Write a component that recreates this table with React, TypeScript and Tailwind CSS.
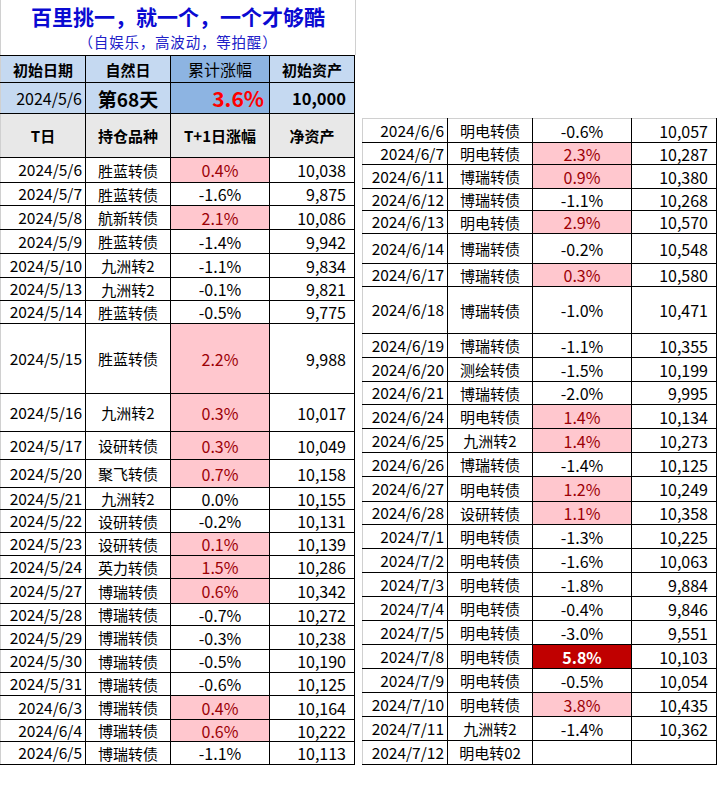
type Row = { d: string; n: string; p: string; v: string; h: string; up?: boolean; big?: boolean }

const left: Row[] = [
  { d: '2024/5/6', n: '胜蓝转债', p: '0.4%', v: '10,038', h: 'h-[25px]', up: true },
  { d: '2024/5/7', n: '胜蓝转债', p: '-1.6%', v: '9,875', h: 'h-[23px]' },
  { d: '2024/5/8', n: '航新转债', p: '2.1%', v: '10,086', h: 'h-[24px]', up: true },
  { d: '2024/5/9', n: '胜蓝转债', p: '-1.4%', v: '9,942', h: 'h-[24px]' },
  { d: '2024/5/10', n: '九洲转2', p: '-1.1%', v: '9,834', h: 'h-[24px]' },
  { d: '2024/5/13', n: '九洲转2', p: '-0.1%', v: '9,821', h: 'h-[23px]' },
  { d: '2024/5/14', n: '胜蓝转债', p: '-0.5%', v: '9,775', h: 'h-[23px]' },
  { d: '2024/5/15', n: '胜蓝转债', p: '2.2%', v: '9,988', h: 'h-[70px]', up: true },
  { d: '2024/5/16', n: '九洲转2', p: '0.3%', v: '10,017', h: 'h-[38px]', up: true },
  { d: '2024/5/17', n: '设研转债', p: '0.3%', v: '10,049', h: 'h-[28px]', up: true },
  { d: '2024/5/20', n: '聚飞转债', p: '0.7%', v: '10,158', h: 'h-[28px]', up: true },
  { d: '2024/5/21', n: '九洲转2', p: '0.0%', v: '10,155', h: 'h-[22px]' },
  { d: '2024/5/22', n: '设研转债', p: '-0.2%', v: '10,131', h: 'h-[23px]' },
  { d: '2024/5/23', n: '设研转债', p: '0.1%', v: '10,139', h: 'h-[23px]', up: true },
  { d: '2024/5/24', n: '英力转债', p: '1.5%', v: '10,286', h: 'h-[23px]', up: true },
  { d: '2024/5/27', n: '博瑞转债', p: '0.6%', v: '10,342', h: 'h-[25px]', up: true },
  { d: '2024/5/28', n: '博瑞转债', p: '-0.7%', v: '10,272', h: 'h-[22px]' },
  { d: '2024/5/29', n: '博瑞转债', p: '-0.3%', v: '10,238', h: 'h-[24px]' },
  { d: '2024/5/30', n: '博瑞转债', p: '-0.5%', v: '10,190', h: 'h-[23px]' },
  { d: '2024/5/31', n: '博瑞转债', p: '-0.6%', v: '10,125', h: 'h-[23px]' },
  { d: '2024/6/3', n: '博瑞转债', p: '0.4%', v: '10,164', h: 'h-[24px]', up: true },
  { d: '2024/6/4', n: '博瑞转债', p: '0.6%', v: '10,222', h: 'h-[22px]', up: true },
  { d: '2024/6/5', n: '博瑞转债', p: '-1.1%', v: '10,113', h: 'h-[23px]' },
]

const right: Row[] = [
  { d: '2024/6/6', n: '明电转债', p: '-0.6%', v: '10,057', h: 'h-[24px]' },
  { d: '2024/6/7', n: '明电转债', p: '2.3%', v: '10,287', h: 'h-[22px]', up: true },
  { d: '2024/6/11', n: '博瑞转债', p: '0.9%', v: '10,380', h: 'h-[24px]', up: true },
  { d: '2024/6/12', n: '博瑞转债', p: '-1.1%', v: '10,268', h: 'h-[22px]' },
  { d: '2024/6/13', n: '明电转债', p: '2.9%', v: '10,570', h: 'h-[23px]', up: true },
  { d: '2024/6/14', n: '博瑞转债', p: '-0.2%', v: '10,548', h: 'h-[30px]' },
  { d: '2024/6/17', n: '博瑞转债', p: '0.3%', v: '10,580', h: 'h-[23px]', up: true },
  { d: '2024/6/18', n: '博瑞转债', p: '-1.0%', v: '10,471', h: 'h-[47px]' },
  { d: '2024/6/19', n: '博瑞转债', p: '-1.1%', v: '10,355', h: 'h-[24px]' },
  { d: '2024/6/20', n: '测绘转债', p: '-1.5%', v: '10,199', h: 'h-[24px]' },
  { d: '2024/6/21', n: '博瑞转债', p: '-2.0%', v: '9,995', h: 'h-[23px]' },
  { d: '2024/6/24', n: '明电转债', p: '1.4%', v: '10,134', h: 'h-[24px]', up: true },
  { d: '2024/6/25', n: '九洲转2', p: '1.4%', v: '10,273', h: 'h-[24px]', up: true },
  { d: '2024/6/26', n: '博瑞转债', p: '-1.4%', v: '10,125', h: 'h-[24px]' },
  { d: '2024/6/27', n: '明电转债', p: '1.2%', v: '10,249', h: 'h-[25px]', up: true },
  { d: '2024/6/28', n: '设研转债', p: '1.1%', v: '10,358', h: 'h-[23px]', up: true },
  { d: '2024/7/1', n: '明电转债', p: '-1.3%', v: '10,225', h: 'h-[24px]' },
  { d: '2024/7/2', n: '明电转债', p: '-1.6%', v: '10,063', h: 'h-[24px]' },
  { d: '2024/7/3', n: '明电转债', p: '-1.8%', v: '9,884', h: 'h-[24px]' },
  { d: '2024/7/4', n: '明电转债', p: '-0.4%', v: '9,846', h: 'h-[24px]' },
  { d: '2024/7/5', n: '明电转债', p: '-3.0%', v: '9,551', h: 'h-[24px]' },
  { d: '2024/7/8', n: '明电转债', p: '5.8%', v: '10,103', h: 'h-[24px]', big: true },
  { d: '2024/7/9', n: '明电转债', p: '-0.5%', v: '10,054', h: 'h-[24px]' },
  { d: '2024/7/10', n: '明电转债', p: '3.8%', v: '10,435', h: 'h-[24px]', up: true },
  { d: '2024/7/11', n: '九洲转2', p: '-1.4%', v: '10,362', h: 'h-[24px]' },
  { d: '2024/7/12', n: '明电转02', p: '', v: '', h: 'h-[24px]' },
]

const font = 'font-["Noto_Sans_CJK_SC","Liberation_Sans",sans-serif]'
const cell = 'border border-black p-0'
// first column sits on the sheet's grid line, drawn light gray like Excel
const edge = 'border-l-[#d0d0d0]'

function pctCell(r: Row) {
  if (r.big) return 'bg-[#c00000] text-white font-bold'
  if (r.up) return 'bg-[#ffc7ce] text-[#9c0006]'
  return 'text-black'
}

function Cols() {
  return (
    <colgroup>
      <col className="w-[85px]" />
      <col className="w-[85px]" />
      <col className="w-[99px]" />
      <col className="w-[85px]" />
    </colgroup>
  )
}

function Body({ rows, topGray }: { rows: Row[]; topGray?: boolean }) {
  return (
    <tbody>
      {rows.map((r, i) => {
        const top = topGray && i === 0 ? 'border-t-[#d0d0d0]' : ''
        return (
          <tr key={r.d} className={r.h}>
            <td className={`${cell} ${edge} ${top} text-right pr-[3px] text-[15.5px]`}>{r.d}</td>
            <td className={`${cell} ${top} text-center`}>{r.n}</td>
            <td className={`${cell} ${top} text-center text-[16px] ${pctCell(r)}`}>{r.p}</td>
            <td className={`${cell} ${top} text-right pr-[8px] text-[16px]`}>{r.v}</td>
          </tr>
        )
      })}
    </tbody>
  )
}

export default function App() {
  return (
    <div className={`w-[728px] h-[790px] bg-white text-[15px] leading-none text-black ${font}`}>
      <div className="flex items-start">
        <div className="w-[356px]">
          <div className="h-[55px] flex flex-col items-center border-l border-r border-[#d0d0d0]">
            <div className="mt-[6px] text-[21px] font-bold text-[#0a0ad2]">百里挑一，就一个，一个才够酷</div>
            <div className="mt-[8px] text-[14.5px] tracking-[0.8px] text-[#2020c8]">（自娱乐，高波动，等拍醒）</div>
          </div>
          <table className="table-fixed border-collapse w-[355px]">
            <Cols />
            <thead>
              <tr className="h-[27px] bg-[#c5d9f1] font-bold">
                <td className={`${cell} ${edge} text-center`}>初始日期</td>
                <td className={`${cell} text-center`}>自然日</td>
                <td className={`${cell} text-center bg-[#8db4e2] font-normal text-[16px]`}>累计涨幅</td>
                <td className={`${cell} text-center`}>初始资产</td>
              </tr>
              <tr className="h-[31px] bg-[#c5d9f1]">
                <td className={`${cell} ${edge} text-right pr-[3px] text-[16px]`}>2024/5/6</td>
                <td className={`${cell} text-center text-[19px] font-bold`}>第68天</td>
                <td className={`${cell} text-right pr-[5px] bg-[#8db4e2] text-[#ff0000] text-[21px] font-bold`}>3.6%</td>
                <td className={`${cell} text-right pr-[8px] text-[16.5px] font-bold`}>10,000</td>
              </tr>
              <tr className="h-[44px] bg-[#e8e8e8] font-bold">
                <td className={`${cell} ${edge} text-center`}>T日</td>
                <td className={`${cell} text-center`}>持仓品种</td>
                <td className={`${cell} text-center`}>T+1日涨幅</td>
                <td className={`${cell} text-center`}>净资产</td>
              </tr>
            </thead>
            <Body rows={left} />
          </table>
        </div>
        <div className="ml-[6px] mt-[118px] w-[356px]">
          <table className="table-fixed border-collapse w-[355px]">
            <Cols />
            <Body rows={right} topGray />
          </table>
        </div>
      </div>
    </div>
  )
}
